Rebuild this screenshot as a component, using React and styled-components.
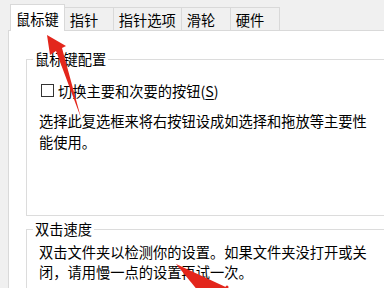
import styled, { createGlobalStyle } from "styled-components";

const GlobalStyle = createGlobalStyle`
  html, body {
    margin: 0;
    padding: 0;
    background: #f0f0f0;
  }
`;

const Frame = styled.div`
  position: relative;
  width: 384px;
  height: 288px;
  overflow: hidden;
  background: #f0f0f0;
  font-family: "Noto Sans CJK SC", "Noto Sans", sans-serif;
  font-size: 14.25px;
  color: #000;
`;

const TabBar = styled.div`
  position: relative;
  z-index: 1;
  display: flex;
  align-items: flex-end;
  height: 30px;
  padding-left: 10px;
`;

const Tab = styled.div`
  box-sizing: border-box;
  display: flex;
  align-items: center;
  height: ${(props) => (props.active ? "27px" : "23px")};
  margin-bottom: ${(props) => (props.active ? "-1px" : "0")};
  margin-left: ${(props) => (props.first ? "0" : "-1px")};
  min-width: 50px;
  padding: 2px 5px 0;
  border: 1px solid #d9d9d9;
  border-bottom: none;
  background: ${(props) => (props.active ? "#fff" : "#f0f0f0")};
  line-height: 1;
  white-space: nowrap;
`;

const Panel = styled.div`
  height: 258px;
  margin-left: 8px;
  padding: 18px 0 0 17px;
  box-sizing: border-box;
  background: #fff;
  border-top: 1px solid #d9d9d9;
  border-left: 1px solid #d9d9d9;
`;

const Group = styled.fieldset`
  margin: ${(props) => props.gap || "0"} -40px 0 0;
  padding: 0 0 ${(props) => props.bottom || "0"} 12px;
  border: 1px solid #dcdcdc;
  min-inline-size: 0;
`;

const Legend = styled.legend`
  margin-left: -6px;
  padding: 0 2px;
  line-height: 20px;
`;

const CheckRow = styled.label`
  display: flex;
  align-items: center;
  height: 20px;
  margin-top: 11px;
`;

const Box = styled.span`
  box-sizing: border-box;
  width: 13px;
  height: 13px;
  margin: 0 4px 0 2px;
  border: 1px solid #333;
  background: #fff;
`;

const Key = styled.span`
  text-decoration: underline;
  text-underline-offset: 2px;
`;

const Note = styled.p`
  width: 330px;
  margin: ${(props) => props.top || "0"} 0 0;
  line-height: ${(props) => props.lh || "20px"};
`;

const Overlay = styled.svg`
  position: absolute;
  left: 0;
  top: 0;
  z-index: 2;
  pointer-events: none;
`;

const tabs = ["鼠标键", "指针", "指针选项", "滑轮", "硬件"];

export default function App() {
  return (
    <Frame>
      <GlobalStyle />
      <TabBar>
        {tabs.map((t, i) => (
          <Tab key={t} active={i === 0} first={i === 0}>
            {t}
          </Tab>
        ))}
      </TabBar>
      <Panel>
        <Group bottom="63px">
          <Legend>鼠标键配置</Legend>
          <CheckRow>
            <Box />
            <span>
              切换主要和次要的按钮(<Key>S</Key>)
            </span>
          </CheckRow>
          <Note top="10px" lh="21px">
            选择此复选框来将右按钮设成如选择和拖放等主要性能使用。
          </Note>
        </Group>
        <Group gap="3px" bottom="40px">
          <Legend>双击速度</Legend>
          <Note top="3px">
            双击文件夹以检测你的设置。如果文件夹没打开或关闭，请用慢一点的设置再试一次。
          </Note>
        </Group>
      </Panel>
      <Overlay width="384" height="288" viewBox="0 0 384 288">
        <polygon
          points="47,35 66,46 62,48 81,118 56,51 50,55"
          fill="#e3261c"
        />
        <polygon points="176,264 230,289 199,292" fill="#e3261c" />
        <circle cx="227" cy="287" r="1.5" fill="#e3261c" />
      </Overlay>
    </Frame>
  );
}
